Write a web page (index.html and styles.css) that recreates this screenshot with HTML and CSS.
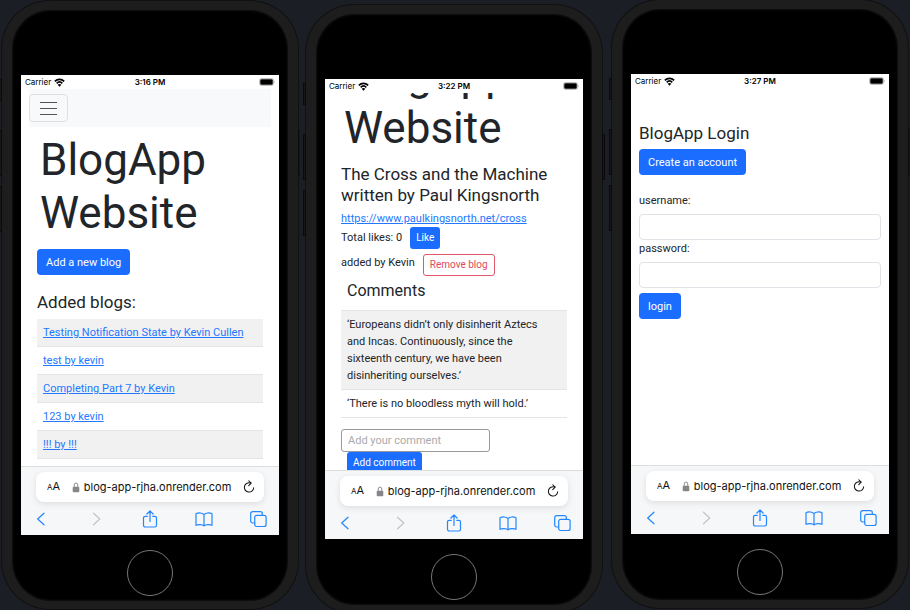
FILE: index.html
```html
<!DOCTYPE html>
<html lang="en">
<head>
<meta charset="utf-8">
<title>BlogApp on mobile</title>
<link rel="stylesheet" href="styles.css">
</head>
<body>
<svg class="sprite" aria-hidden="true">
  <symbol id="wifi" viewBox="0 0 20 16">
    <g fill="none" stroke="currentColor" stroke-width="3">
      <path d="M1.500 5.800C6.400 1 13.600 1 18.500 5.800"/>
      <path d="M4.900 9.500C7.800 6.700 12.200 6.700 15.100 9.500"/>
    </g>
    <path d="M10 15.500 6.600 12.100C8.600 10.400 11.400 10.400 13.400 12.100Z" fill="currentColor"/>
  </symbol>
  <symbol id="battery" viewBox="0 0 32 16">
    <rect x="1" y="1" width="28" height="14" rx="4" fill="none" stroke="#a9a9a9" stroke-width="1.500"/>
    <rect x="2.500" y="2.500" width="25" height="11" rx="2.500" fill="currentColor"/>
    <path d="M30 5.500c1.800.6 1.800 4.400 0 5Z" fill="#a9a9a9"/>
  </symbol>
  <symbol id="lock" viewBox="0 0 14 20">
    <rect x="1" y="8.500" width="12" height="10" rx="1.800" fill="currentColor"/>
    <path d="M3.800 9V5.500a3.200 3.600 0 0 1 6.400 0V9" fill="none" stroke="currentColor" stroke-width="1.700"/>
  </symbol>
  <symbol id="reload" viewBox="0 0 24 28">
    <path d="M15.500 6.200A9.300 9.300 0 1 0 21.300 15.500" fill="none" stroke="currentColor" stroke-width="2.100" stroke-linecap="round"/>
    <path d="M11.500 1.500 16.300 6.300 11.500 11.300" fill="none" stroke="currentColor" stroke-width="2.100" stroke-linecap="round" stroke-linejoin="round"/>
  </symbol>
  <symbol id="back" viewBox="0 0 18 18"><path d="M11 3.200 4.700 9l6.300 5.800" /></symbol>
  <symbol id="forward" viewBox="0 0 18 18"><path d="M6.500 3.200 12.800 9l-6.300 5.800"/></symbol>
  <symbol id="share" viewBox="0 0 18 18"><path d="M6.300 6.300H4.200a1.700 1.700 0 0 0-1.700 1.700v7.300A1.700 1.700 0 0 0 4.200 17h9.600a1.700 1.700 0 0 0 1.700-1.700V8a1.700 1.700 0 0 0-1.700-1.700h-2.100M9 11.500V1.200M5.900 4 9 1l3.100 3"/></symbol>
  <symbol id="book" viewBox="0 0 18 18"><path d="M9 4.600C7.300 2.800 3.500 2.500 1 3.700v11.600c2.500-1.100 6.300-.9 8 .6 1.700-1.500 5.500-1.700 8-.6V3.700C14.500 2.500 10.700 2.800 9 4.600ZM9 4.600v11.300"/></symbol>
  <symbol id="tabs" viewBox="0 0 18 18"><rect x="5.700" y="5.300" width="11.400" height="11.200" rx="2"/><path d="M5.700 13H3.700a2 2 0 0 1-2-2V3.700a2 2 0 0 1 2-2h7.600a2 2 0 0 1 2 2v1.600"/></symbol>
</svg>
<main class="stage">
  <section class="panel panel-a">
    <div class="phone">
      <i class="key key-mute"></i><i class="key key-up"></i><i class="key key-down"></i><i class="key key-power"></i>
      <div class="screen">
        <div class="status"><span class="carrier">Carrier <svg class="wifi"><use href="#wifi"/></svg></span><b>3:16 PM</b><svg class="battery"><use href="#battery"/></svg></div>
        <div class="view">
          <nav class="navbar"><button class="toggler" type="button" aria-label="Menu"><i></i><i></i><i></i></button></nav>
          <div class="container">
            <h1>BlogApp Website</h1>
            <button class="btn add-blog" type="button">Add a new blog</button>
            <h2 class="list-title">Added blogs:</h2>
            <table class="striped">
              <tbody>
                <tr><td><a href="#1">Testing Notification State by Kevin Cullen</a></td></tr>
                <tr><td><a href="#2">test by kevin</a></td></tr>
                <tr><td><a href="#3">Completing Part 7 by Kevin</a></td></tr>
                <tr><td><a href="#4">123 by kevin</a></td></tr>
                <tr><td><a href="#5">!!! by !!!</a></td></tr>
              </tbody>
            </table>
          </div>
        </div>
        <div class="browser">
          <div class="address"><span class="aa"><small>A</small>A</span><span class="url"><svg class="lock"><use href="#lock"/></svg>blog-app-rjha.onrender.com</span><button type="button" aria-label="Reload"><svg class="reload"><use href="#reload"/></svg></button></div>
          <div class="tools">
            <button type="button" aria-label="Back"><svg><use href="#back"/></svg></button>
            <button type="button" aria-label="Forward" disabled><svg><use href="#forward"/></svg></button>
            <button type="button" aria-label="Share"><svg><use href="#share"/></svg></button>
            <button type="button" aria-label="Bookmarks"><svg><use href="#book"/></svg></button>
            <button type="button" aria-label="Tabs"><svg><use href="#tabs"/></svg></button>
          </div>
        </div>
      </div>
      <div class="home"></div>
    </div>
  </section>

  <section class="panel panel-b">
    <div class="phone">
      <i class="key key-mute"></i><i class="key key-up"></i><i class="key key-down"></i><i class="key key-power"></i>
      <div class="screen">
        <div class="status"><span class="carrier">Carrier <svg class="wifi"><use href="#wifi"/></svg></span><b>3:22 PM</b><svg class="battery"><use href="#battery"/></svg></div>
        <div class="view">
          <div class="container scrolled">
            <h1>BlogApp Website</h1>
            <h2 class="post-title">The Cross and the Machine written by Paul Kingsnorth</h2>
            <a class="post-link" href="#cross">https://www.paulkingsnorth.net/cross</a>
            <div class="row"><span>Total likes: 0</span><button class="btn small" type="button">Like</button></div>
            <div class="row owner"><span>added by Kevin</span><button class="btn small danger" type="button">Remove blog</button></div>
            <h3>Comments</h3>
            <table class="striped comments">
              <tbody>
                <tr><td>‘Europeans didn’t only disinherit Aztecs and Incas. Continuously, since the sixteenth century, we have been disinheriting ourselves.’</td></tr>
                <tr><td>‘There is no bloodless myth will hold.’</td></tr>
              </tbody>
            </table>
            <form class="comment-form">
              <input class="comment" type="text" placeholder="Add your comment" aria-label="Add your comment">
              <button class="btn small" type="button">Add comment</button>
            </form>
          </div>
        </div>
        <div class="browser">
          <div class="address"><span class="aa"><small>A</small>A</span><span class="url"><svg class="lock"><use href="#lock"/></svg>blog-app-rjha.onrender.com</span><button type="button" aria-label="Reload"><svg class="reload"><use href="#reload"/></svg></button></div>
          <div class="tools">
            <button type="button" aria-label="Back"><svg><use href="#back"/></svg></button>
            <button type="button" aria-label="Forward" disabled><svg><use href="#forward"/></svg></button>
            <button type="button" aria-label="Share"><svg><use href="#share"/></svg></button>
            <button type="button" aria-label="Bookmarks"><svg><use href="#book"/></svg></button>
            <button type="button" aria-label="Tabs"><svg><use href="#tabs"/></svg></button>
          </div>
        </div>
      </div>
      <div class="home"></div>
    </div>
  </section>

  <section class="panel panel-c">
    <div class="phone">
      <i class="key key-mute"></i><i class="key key-up"></i><i class="key key-down"></i><i class="key key-power"></i>
      <div class="screen">
        <div class="status"><span class="carrier">Carrier <svg class="wifi"><use href="#wifi"/></svg></span><b>3:27 PM</b><svg class="battery"><use href="#battery"/></svg></div>
        <div class="view">
          <form class="login">
            <h2>BlogApp Login</h2>
            <button class="btn" type="button">Create an account</button>
            <label class="first" for="username">username:</label>
            <input class="field" id="username" type="text">
            <label for="password">password:</label>
            <input class="field" id="password" type="password">
            <button class="btn submit" type="button">login</button>
          </form>
        </div>
        <div class="browser">
          <div class="address"><span class="aa"><small>A</small>A</span><span class="url"><svg class="lock"><use href="#lock"/></svg>blog-app-rjha.onrender.com</span><button type="button" aria-label="Reload"><svg class="reload"><use href="#reload"/></svg></button></div>
          <div class="tools">
            <button type="button" aria-label="Back"><svg><use href="#back"/></svg></button>
            <button type="button" aria-label="Forward" disabled><svg><use href="#forward"/></svg></button>
            <button type="button" aria-label="Share"><svg><use href="#share"/></svg></button>
            <button type="button" aria-label="Bookmarks"><svg><use href="#book"/></svg></button>
            <button type="button" aria-label="Tabs"><svg><use href="#tabs"/></svg></button>
          </div>
        </div>
      </div>
      <div class="home"></div>
    </div>
  </section>
</main>
</body>
</html>
```
FILE: styles.css
```css
* { box-sizing: border-box; }

body {
  margin: 0;
  background: #1b1e25;
  color: #212529;
  font: 11px/17px Roboto, "Liberation Sans", sans-serif;
}

button, input { font: inherit; color: inherit; margin: 0; }
button { border: 0; padding: 0; background: none; cursor: pointer; }
h1, h2, h3 { margin: 0; font-weight: 400; }
a { color: #2478ff; }

.sprite { position: absolute; width: 0; height: 0; }

/* device frames */
.stage {
  display: grid;
  grid-template-columns: 300fr 308fr 302fr;
  height: 100vh;
  overflow: hidden;
}
.panel { padding: 1px 2px 0; overflow: hidden; }
.panel-b { padding: 5px 6px 0; }
.panel-c { padding: 0 2px 0 4px; }

.phone {
  position: relative;
  display: flex;
  flex-direction: column;
  height: calc(100vh - 2px);
  padding: 65px 9px 5px;
  border: 10px solid #1d1d1d;
  border-width: 9px 10px 8px;
  border-radius: 48px;
  background: #000;
  box-shadow: 0 0 0 1px #111, inset 0 0 2px 1px #111;
}
.key {
  position: absolute;
  left: -13px;
  width: 3px;
  height: 46px;
  background: #17181a;
  border: 1px solid #0a0a0c;
}
.key-mute { top: 69px; height: 22px; }
.key-up { top: 120px; }
.key-down { top: 176px; }
.key-power { top: 120px; left: auto; right: -13px; }

.screen {
  flex: 1;
  min-height: 0;
  display: flex;
  flex-direction: column;
  background: #fff;
}
.home {
  width: 46px;
  height: 46px;
  margin: 15px auto 0;
  border: 1px solid #777;
  border-radius: 50%;
}

.status {
  display: grid;
  grid-template-columns: 1fr auto 1fr;
  align-items: center;
  height: 14px;
  padding: 0 4px;
  font-family: Inter, sans-serif;
  font-size: 8px;
  line-height: 14px;
  color: #000;
}
.status b { font-weight: 600; }
.carrier { display: flex; align-items: center; gap: 3px; }
.wifi { width: 11px; height: 9px; }
.battery { width: 16px; height: 8px; justify-self: end; }

.view { flex: 1; min-height: 0; overflow: hidden; }

/* browser chrome */
.browser {
  padding: 5px 12px 0;
  height: 69px;
  border-top: 1px solid #dcdddd;
  background: #f6f7f8;
  font-family: Inter, sans-serif;
}
.address {
  display: flex;
  align-items: center;
  justify-content: space-between;
  height: 30px;
  margin: 0 3px;
  padding: 0 9px 0 11px;
  border-radius: 8px;
  background: #fff;
  box-shadow: 0 2px 6px #0000001a;
  color: #111;
}
.aa { font-size: 11px; }
.aa small { font-size: 8px; }
.url { display: flex; align-items: center; gap: 4px; }
.lock { width: 8px; height: 11px; color: #86868a; }
.address button, .tools button { display: flex; }
.reload { width: 12px; height: 14px; }
.tools { display: flex; justify-content: space-between; padding-top: 8px; color: #2487ff; }
.tools svg { width: 18px; height: 18px; fill: none; stroke: currentColor; stroke-width: 1.2; stroke-linecap: round; stroke-linejoin: round; }
.tools button:disabled { color: #c3c4c6; }

/* blog pages */
.navbar { margin: 0 8px; padding: 5px 0; background: #f8f9fb; }
.toggler {
  display: flex;
  flex-direction: column;
  align-items: center;
  justify-content: center;
  gap: 5px;
  width: 39px;
  height: 28px;
  border: 1px solid #dddfe1;
  border-radius: 4px;
}
.toggler i { width: 17px; height: 1px; background: #555; }

.container { padding: 7px 16px 0; }
h1 { padding: 0 3px; font-size: 44px; line-height: 53px; }
h2 { font-size: 17px; line-height: 21px; }

.btn {
  display: block;
  height: 26px;
  padding: 0 9px;
  border-radius: 4px;
  background: #1a6dff;
  color: #fff;
  white-space: nowrap;
}
.add-blog { margin-top: 9px; }
.list-title { margin: 17px 0 6px; }

.striped { width: 100%; border-collapse: collapse; }
.striped td { padding: 5px 6px; border-bottom: 1px solid #e3e4e5; }
.striped tr:nth-child(odd) td { background: #f1f1f1; }

.scrolled { margin-top: -44px; padding-top: 0; }
.post-title { margin: 9px 0 4px; }
.post-link { display: block; }
.row { display: flex; gap: 8px; align-items: flex-start; }
.row span { padding-top: 2px; }
.row.owner { margin-top: 5px; }
.row.owner span { padding-top: 0; }
.btn.small { height: 22px; padding: 0 6px; border-radius: 3px; font-size: 10px; line-height: 20px; }
.btn.danger { border: 1px solid #e0566a; background: #fff; color: #dc4a5c; }
h3 { padding: 4px 6px 9px; font-size: 16px; line-height: 21px; }
.comments { border-top: 1px solid #e3e4e5; }
.comments td { padding-right: 16px; }
.comment-form { padding-top: 11px; }
.comment {
  display: block;
  width: 66%;
  height: 23px;
  padding: 0 6px;
  border: 1px solid #999;
  border-radius: 3px;
}
.comment::placeholder { color: #aaa; opacity: 1; }
.comment-form .btn { margin-left: 6px; }

.login { padding: 35px 8px 0; }
.login .btn { margin-top: 5px; }
.login label { display: block; }
.login .first { margin-top: 17px; }
.field {
  display: block;
  width: 100%;
  height: 26px;
  margin-top: 5px;
  padding: 0 8px;
  border: 1px solid #dfe2e6;
  border-radius: 4px;
  background: #fff;
}
```
